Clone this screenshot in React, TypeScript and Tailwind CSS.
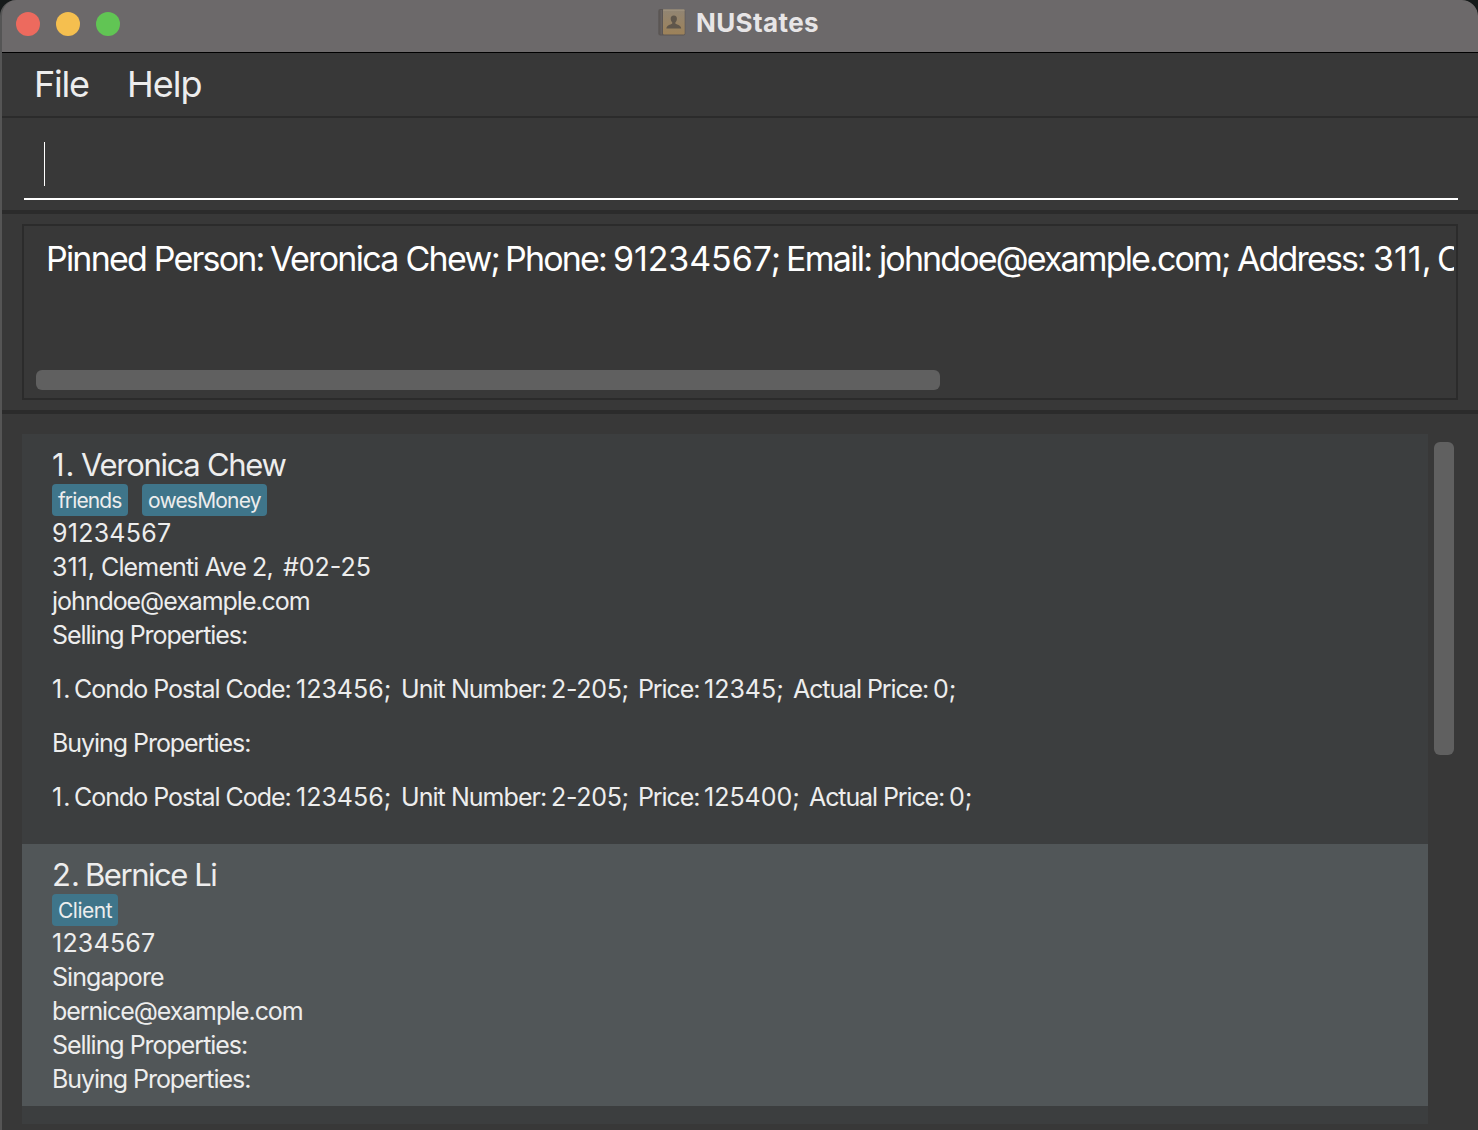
type Seg = { text: string; cls: string };

function Segments({ items, className }: { items: Seg[]; className: string }) {
  return (
    <div className={`flex items-center whitespace-pre ${className}`}>
      {items.map((s, i) => (
        <span key={i} className={`shrink-0 ${s.cls}`}>
          {s.text}
        </span>
      ))}
    </div>
  );
}

const pinned: Seg[] = [
  { text: "Pinned Person: ", cls: "w-[224px] tracking-[-1.8px]" },
  { text: "Veronica Chew; ", cls: "w-[235px] tracking-[-1.72px]" },
  { text: "Phone: ", cls: "w-[108px] tracking-[-1.8px]" },
  { text: "91234567; ", cls: "w-[173px] tracking-[-0.1px]" },
  { text: "Email: ", cls: "w-[93px] tracking-[-1.7px]" },
  { text: "johndoe@example.com; ", cls: "w-[358px] tracking-[-1.87px]" },
  { text: "Address: ", cls: "w-[136px] tracking-[-1.85px]" },
  { text: "311, ", cls: "w-[64px]" },
  { text: "Clementi Ave 2, #02-25", cls: "tracking-[-1.8px]" },
];

const address: Seg[] = [
  { text: "311, ", cls: "w-[49px]" },
  { text: "Clementi Ave 2,  ", cls: "w-[182px] tracking-[-0.85px]" },
  { text: "#02-25", cls: "" },
];

const property = (price: string, priceCls: string): Seg[] => [
  { text: "1.", cls: "w-[22px] tracking-[1px]" },
  { text: "Condo Postal Code: ", cls: "w-[222px] tracking-[-1.02px]" },
  { text: "123456;  ", cls: "w-[105px]" },
  { text: "Unit Number: ", cls: "w-[150px] tracking-[-0.95px]" },
  { text: "2-205;  ", cls: "w-[87px] tracking-[-0.3px]" },
  { text: "Price: ", cls: "w-[66px] tracking-[-1.1px]" },
  { text: price, cls: priceCls },
  { text: "Actual Price: ", cls: "w-[140px] tracking-[-1.1px]" },
  { text: "0;", cls: "" },
];

function Line({ children, className = "" }: { children: string; className?: string }) {
  return <div className={`h-[34px] whitespace-pre ${className}`}>{children}</div>;
}

function Tag({ children, className }: { children: string; className: string }) {
  return (
    <span className={`h-8 rounded-[4px] bg-[#3f758a] pl-1.5 text-[21px] leading-[33px] ${className}`}>
      {children}
    </span>
  );
}

function AppIcon() {
  return (
    <svg width="28" height="28" viewBox="0 0 28 28">
      <defs>
        <linearGradient id="cover" x1="0" y1="0" x2="0" y2="1">
          <stop offset="0" stopColor="#918574" />
          <stop offset="1" stopColor="#9d8259" />
        </linearGradient>
      </defs>
      <rect x="0.3" y="1" width="27" height="26.500" rx="2" fill="#5b5654" />
      <rect x="5" y="1.500" width="21.700" height="25" rx="1" fill="url(#cover)" />
      <path d="M5 2h21.500" stroke="#a79a84" strokeWidth="1" />
      <path d="M3.200 2v24.500" stroke="#6b6564" strokeWidth="1.200" />
      <path
        d="M15.800 7.500c-2.200 0-3.200 1.500-3.100 3.400.1 1.500.8 2.600 1.500 3.400v1.500c-1.900 1-5.500 1.200-5.800 4.700h14.800c-.3-3.500-3.900-3.700-5.800-4.700v-1.500c.8-.8 1.400-1.900 1.500-3.400.1-1.900-.9-3.400-3.100-3.400z"
        fill="#5f564b"
      />
    </svg>
  );
}

export default function App() {
  return (
    <div className="h-[1130px] w-[1478px] overflow-hidden bg-[#161a1a] font-['Inter',sans-serif]">
      <div className="flex h-full flex-col overflow-hidden rounded-t-[16px] border-l-2 border-[#555555] bg-[#383838] text-[#ededed]">
        <header className="relative -ml-0.5 flex h-[53px] shrink-0 items-start justify-center rounded-t-[16px] border-b border-l-2 border-b-black border-l-[#858384] bg-[#6c696a]">
          <div className="absolute left-3.5 top-3 flex gap-4">
            <span className="size-6 rounded-full bg-[#ed6a5e]" />
            <span className="size-6 rounded-full bg-[#f5bf4f]" />
            <span className="size-6 rounded-full bg-[#61c554]" />
          </div>
          <div className="mr-[3px] mt-2 flex h-7 items-center gap-2.5 text-[26px] font-bold tracking-[0.4px] text-[#e7e5e6]">
            <AppIcon />
            <span>NUStates</span>
          </div>
        </header>

        <nav className="flex h-[65px] shrink-0 border-b-2 border-[#2b2b2b] pl-8 text-[36px] leading-[62px]">
          <span className="w-[93px] tracking-[-1.2px]">File</span>
          <span className="tracking-[-0.95px]">Help</span>
        </nav>

        <section className="h-24 shrink-0 border-b-4 border-[#2b2b2b] pl-[22px] pr-5 pt-6">
          <div className="h-[58px] border-b-2 border-white pl-5">
            <div className="h-11 w-px bg-white" />
          </div>
        </section>

        <section className="h-[200px] shrink-0 border-b-4 border-[#2b2b2b] px-5 pt-2.5">
          <div className="flex h-44 flex-col justify-between overflow-hidden border-2 border-[#2b2b2b] pb-2 pt-2.5">
            <div className="mr-[2px] overflow-hidden pl-[22px]">
              <Segments items={pinned} className="h-[46px] text-[34px] leading-[46px] text-white" />
            </div>
            <div className="ml-3 h-5 w-[904px] rounded-[6px] bg-[#606060]" />
          </div>
        </section>

        <main className="flex pl-5 pt-5 text-[25px] leading-[34px]">
          <div className="flex w-[1406px] flex-col">
            <article className="h-[410px] bg-[#3c3e3f] pl-[30px] pt-3">
              <div className="flex h-[38px] items-center text-[31px] leading-[38px]">
                <span className="w-[29px] tracking-[1px]">1.</span>
                <span className="tracking-[-1.3px]">Veronica Chew</span>
              </div>
              <div className="flex gap-3.5">
                <Tag className="w-[76px] tracking-[-0.9px]">friends</Tag>
                <Tag className="w-[125px] tracking-[-0.8px]">owesMoney</Tag>
              </div>
              <Line className="tracking-[0.25px]">91234567</Line>
              <Segments items={address} className="h-[34px]" />
              <Line className="tracking-[-1.05px]">johndoe@example.com</Line>
              <Line className="tracking-[-1.03px]">Selling Properties:</Line>
              <Segments items={property("12345;  ", "w-[89px]")} className="my-5 h-[34px]" />
              <Line className="tracking-[-1.05px]">Buying Properties:</Line>
              <Segments items={property("125400;  ", "w-[105px]")} className="mt-5 h-[34px]" />
            </article>

            <article className="h-[262px] bg-[#515658] pl-[30px] pt-3">
              <div className="flex h-[38px] items-center text-[31px] leading-[38px]">
                <span className="w-[33px]">2.</span>
                <span className="tracking-[-1.45px]">Bernice Li</span>
              </div>
              <div className="flex">
                <Tag className="w-[66px] tracking-[-0.5px]">Client</Tag>
              </div>
              <Line className="tracking-[0.22px]">1234567</Line>
              <Line className="tracking-[-0.95px]">Singapore</Line>
              <Line className="tracking-[-1.1px]">bernice@example.com</Line>
              <Line className="tracking-[-1.03px]">Selling Properties:</Line>
              <Line className="tracking-[-1.05px]">Buying Properties:</Line>
            </article>

            <article className="h-[18px] bg-[#3c3e3f]" />
          </div>
          <div className="ml-1.5 mt-2 h-[313px] w-5 rounded-[6px] bg-[#606060]" />
        </main>
      </div>
    </div>
  );
}
